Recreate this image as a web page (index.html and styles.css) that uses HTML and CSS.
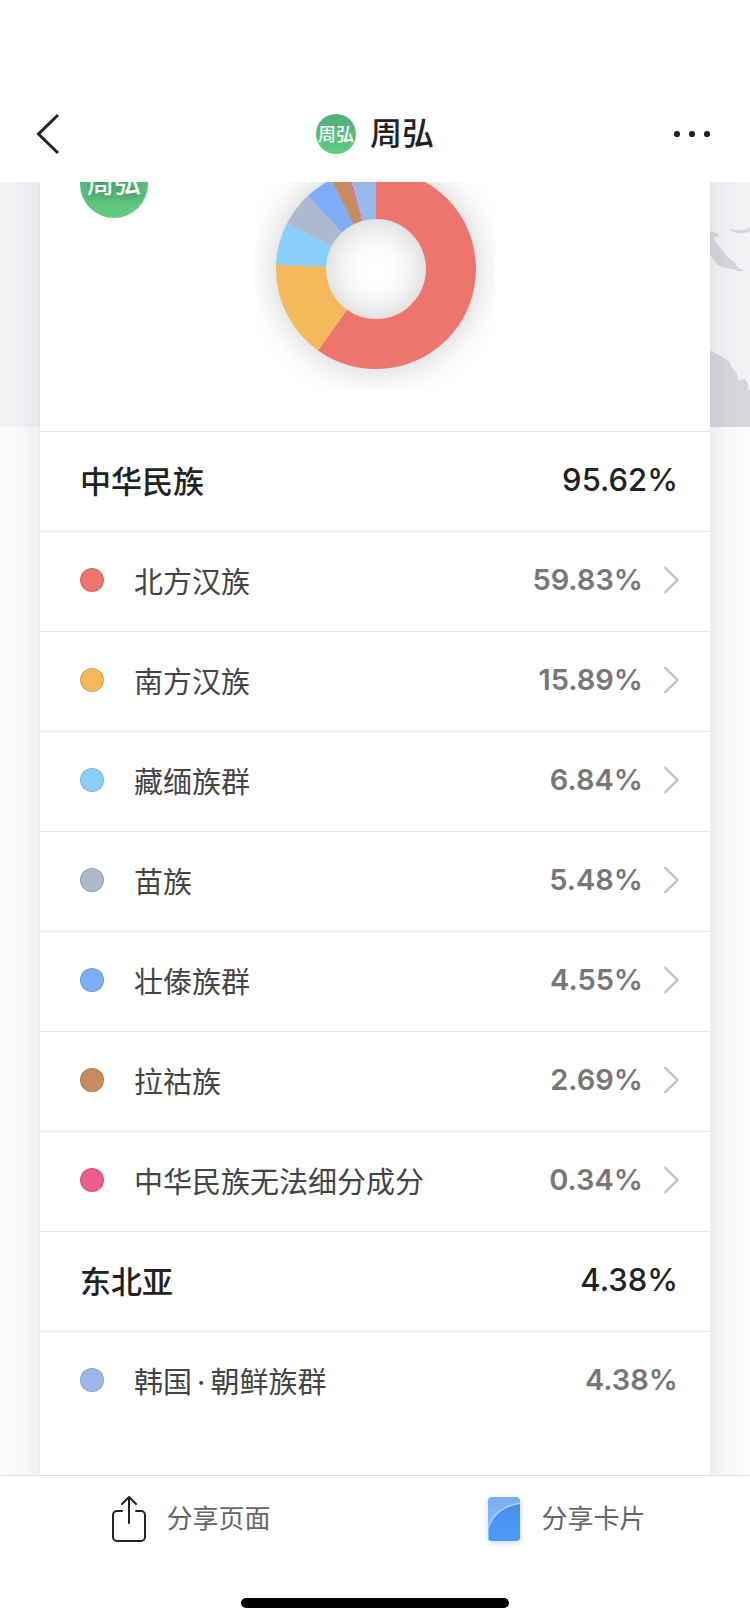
FILE: index.html
```html
<!DOCTYPE html>
<html lang="zh-CN">
<head>
<meta charset="utf-8">
<meta name="viewport" content="width=device-width, initial-scale=1">
<title>周弘</title>
<link rel="stylesheet" href="styles.css">
</head>
<body>
<header class="navbar">
  <button class="nav-button" type="button" aria-label="返回">
    <svg width="24" height="42" viewBox="0 0 24 42" fill="none" stroke="#222" stroke-width="3"><path d="M22 2L2.500 21 22 40"/></svg>
  </button>
  <div class="nav-title">
    <span class="avatar avatar-small" aria-hidden="true">周弘</span>
    <h1 class="nav-name">周弘</h1>
  </div>
  <button class="nav-button nav-more" type="button" aria-label="更多">
    <svg width="38" height="8" viewBox="0 0 38 8" fill="#222"><circle cx="4" cy="4" r="3.100"/><circle cx="19" cy="4" r="3.100"/><circle cx="34" cy="4" r="3.100"/></svg>
  </button>
</header>

<main class="content">
  <div class="map">
    <svg class="map-land" width="40" height="245" viewBox="0 0 40 245" fill="#d8d8de" stroke="#fafafc" stroke-width="1">
      <path d="M-2 48L9 51 10 55 4 56C7 64 13 66 16 73L25 80 28 85 37 89 30 90C20 86 9 88 4 79L-2 71Z"/>
      <path d="M17 46L30 48 31 43 32 48 42 44V49C34 54 24 53 17 46Z"/>
      <path d="M38 21L42 19V23Z"/>
      <path d="M-2 167L8 172 20 179 22 185 27 191 29 198 34 196 38 200 39 207 42 210V247H-2Z"/>
    </svg>
  </div>

  <section class="card">
    <div class="overview">
      <span class="avatar avatar-large" aria-hidden="true">周弘</span>
      <svg class="chart" width="240" height="240" viewBox="-121 -119 240 240" role="img" aria-label="族群成分">
        <g class="chart-ring" fill="none" stroke-width="50" transform="rotate(-90)">
          <circle r="75" pathLength="100" stroke="#ee746e" stroke-dasharray="59.83 100"/>
          <circle r="75" pathLength="100" stroke="#f4b95a" stroke-dasharray="15.89 100" stroke-dashoffset="-59.83"/>
          <circle r="75" pathLength="100" stroke="#8acffb" stroke-dasharray="6.84 100" stroke-dashoffset="-75.72"/>
          <circle r="75" pathLength="100" stroke="#acb9cf" stroke-dasharray="5.48 100" stroke-dashoffset="-82.56"/>
          <circle r="75" pathLength="100" stroke="#7facf8" stroke-dasharray="4.55 100" stroke-dashoffset="-88.04"/>
          <circle r="75" pathLength="100" stroke="#c98b5e" stroke-dasharray="2.69 100" stroke-dashoffset="-92.59"/>
          <circle r="75" pathLength="100" stroke="#eb5d8b" stroke-dasharray=".34 100" stroke-dashoffset="-95.28"/>
          <circle r="75" pathLength="100" stroke="#98b8e9" stroke-dasharray="4.38 100" stroke-dashoffset="-95.62"/>
        </g>
      </svg>
    </div>

    <h2 class="row group"><span>中华民族</span><span>95.62%</span></h2>
    <a class="row item" href="#north-han"><span class="dot red"></span><span class="name">北方汉族</span><span class="value">59.83%</span><svg class="arrow" width="17" height="28" viewBox="0 0 17 28"><path d="M1.500 1L14.500 14 1.500 27"/></svg></a>
    <a class="row item" href="#south-han"><span class="dot amber"></span><span class="name">南方汉族</span><span class="value">15.89%</span><svg class="arrow" width="17" height="28" viewBox="0 0 17 28"><path d="M1.500 1L14.500 14 1.500 27"/></svg></a>
    <a class="row item" href="#tibeto-burman"><span class="dot sky"></span><span class="name">藏缅族群</span><span class="value">6.84%</span><svg class="arrow" width="17" height="28" viewBox="0 0 17 28"><path d="M1.500 1L14.500 14 1.500 27"/></svg></a>
    <a class="row item" href="#miao"><span class="dot slate"></span><span class="name">苗族</span><span class="value">5.48%</span><svg class="arrow" width="17" height="28" viewBox="0 0 17 28"><path d="M1.500 1L14.500 14 1.500 27"/></svg></a>
    <a class="row item" href="#zhuang-dai"><span class="dot blue"></span><span class="name">壮傣族群</span><span class="value">4.55%</span><svg class="arrow" width="17" height="28" viewBox="0 0 17 28"><path d="M1.500 1L14.500 14 1.500 27"/></svg></a>
    <a class="row item" href="#lahu"><span class="dot brown"></span><span class="name">拉祜族</span><span class="value">2.69%</span><svg class="arrow" width="17" height="28" viewBox="0 0 17 28"><path d="M1.500 1L14.500 14 1.500 27"/></svg></a>
    <a class="row item" href="#unassigned"><span class="dot pink"></span><span class="name">中华民族无法细分成分</span><span class="value">0.34%</span><svg class="arrow" width="17" height="28" viewBox="0 0 17 28"><path d="M1.500 1L14.500 14 1.500 27"/></svg></a>
    <h2 class="row group"><span>东北亚</span><span>4.38%</span></h2>
    <div class="row item"><span class="dot periwinkle"></span><span class="name">韩国<span class="separator">·</span>朝鲜族群</span><span class="value">4.38%</span></div>
  </section>
</main>

<footer class="toolbar">
  <div class="actions">
    <button class="action" type="button">
      <svg width="34" height="48" viewBox="0 0 34 48" fill="none" stroke="#222" stroke-width="2" stroke-linecap="round" stroke-linejoin="round"><path d="M10 16H5a4 4 0 0 0-4 4v22a4 4 0 0 0 4 4h24a4 4 0 0 0 4-4V20a4 4 0 0 0-4-4h-5M17 28V2M10 9l7-7 7 7"/></svg>
      <span class="action-label">分享页面</span>
    </button>
    <button class="action" type="button">
      <svg class="card-icon" width="34" height="46" viewBox="0 0 34 46">
        <defs>
          <linearGradient id="card-back" x1="0" y1="0" x2="0" y2="1"><stop offset="0" stop-color="#77aff4"/><stop offset="1" stop-color="#8fbff8"/></linearGradient>
          <linearGradient id="card-front" x1="0" y1="0" x2="0" y2="1"><stop offset="0" stop-color="#4a8bee"/><stop offset="1" stop-color="#4d9bfb"/></linearGradient>
          <clipPath id="card-shape"><rect x="1" y="1" width="32" height="44" rx="4"/></clipPath>
        </defs>
        <g clip-path="url(#card-shape)">
          <rect x="1" y="1" width="32" height="44" fill="url(#card-back)"/>
          <path d="M1 32C6 18 18 9 35 7V46H1Z" fill="url(#card-front)" stroke="#a5d2fc" stroke-width="1.400"/>
        </g>
      </svg>
      <span class="action-label">分享卡片</span>
    </button>
  </div>
  <div class="home-indicator"></div>
</footer>
</body>
</html>
```

FILE: styles.css
```css
* {
  box-sizing: border-box;
}

body {
  margin: 0;
  height: 100vh;
  display: flex;
  flex-direction: column;
  overflow: hidden;
  background: #fff;
  color: #222;
  font-family: Inter, "Noto Sans CJK SC", sans-serif;
}

button {
  border: 0;
  padding: 0;
  background: none;
  font: inherit;
  color: inherit;
  cursor: pointer;
}

svg {
  display: block;
  flex: none;
}

.navbar {
  flex: none;
  display: grid;
  grid-template-columns: 1fr auto 1fr;
  align-items: center;
  height: 182px;
  padding: 86px 36px 0;
}

.nav-button {
  justify-self: start;
}

.nav-more {
  justify-self: end;
  padding-right: 3px;
}

.nav-title {
  display: flex;
  align-items: center;
  gap: 14px;
}

.nav-name {
  margin: 0;
  font-size: 32px;
  line-height: 40px;
  font-weight: 500;
}

.avatar {
  display: flex;
  align-items: center;
  justify-content: center;
  border-radius: 50%;
  background: linear-gradient(#4fae7b, #62cc80);
  color: #fff;
  white-space: nowrap;
}

.avatar-small {
  width: 40px;
  height: 40px;
  padding-bottom: 2px;
  font-size: 18px;
  font-weight: 500;
}

.avatar-large {
  width: 68px;
  height: 68px;
  padding-bottom: 6px;
  font-size: 27px;
  font-weight: 500;
  text-shadow: 0 3px 6px rgba(0, 0, 0, 0.3);
}

.content {
  flex: 1;
  min-height: 0;
  position: relative;
  overflow: hidden;
  background: #fdfdff;
}

.map {
  position: absolute;
  inset: 0 0 auto;
  height: 245px;
  display: flex;
  justify-content: flex-end;
  background: #f5f5f8;
}

.card {
  position: relative;
  height: 1500px;
  margin: -72px 40px 0;
  background: #fff;
  box-shadow: 0 0 44px rgba(40, 40, 70, 0.13), 0 0 2px rgba(40, 40, 70, 0.08);
}

.overview {
  display: grid;
  grid-template-columns: 1fr auto 1fr;
  align-items: start;
  height: 321px;
  padding: 40px 40px 0;
}

.chart-ring {
  filter: drop-shadow(0 0 18px rgba(0, 0, 0, 0.2));
}

.row {
  display: flex;
  align-items: center;
  height: 100px;
  margin: 0;
  padding: 0 32px 4px 40px;
  border-top: 1px solid #e8e8eb;
}

.group {
  justify-content: space-between;
  font-size: 31px;
  font-weight: 500;
}

.item {
  color: #444;
  font-size: 29px;
  text-decoration: none;
}

a.item {
  padding-right: 30px;
}

.name {
  flex: 1;
}

.separator {
  margin: 0 5px;
}

.value {
  color: #777;
  font-weight: 600;
}

.dot {
  width: 24px;
  height: 24px;
  margin-right: 30px;
  border: 1px solid rgba(0, 0, 0, 0.12);
  border-radius: 50%;
}

.red { background: #ee746e; }
.amber { background: #f4b95a; }
.sky { background: #8acffb; }
.slate { background: #acb9cf; }
.blue { background: #7facf8; }
.brown { background: #c98b5e; }
.pink { background: #eb5d8b; }
.periwinkle { background: #98b8e9; }

.arrow {
  margin-left: 20px;
  fill: none;
  stroke: #c0c0c6;
  stroke-width: 2.4;
}

.toolbar {
  flex: none;
  display: flex;
  flex-direction: column;
  justify-content: space-between;
  height: 149px;
  padding: 18px 0 16px;
  border-top: 1px solid #dfdfe1;
  background: #fff;
}

.actions {
  display: grid;
  grid-template-columns: 1fr 1fr;
}

.action {
  display: flex;
  align-items: center;
  justify-content: center;
  gap: 20px;
  height: 50px;
  padding-left: 8px;
  color: #666;
  font-size: 26px;
}

.action-label {
  padding-bottom: 6px;
}

.card-icon {
  filter: drop-shadow(0 2px 3px rgba(80, 150, 250, 0.35));
}

.home-indicator {
  align-self: center;
  width: 268px;
  height: 10px;
  border-radius: 5px;
  background: #000;
}
```
